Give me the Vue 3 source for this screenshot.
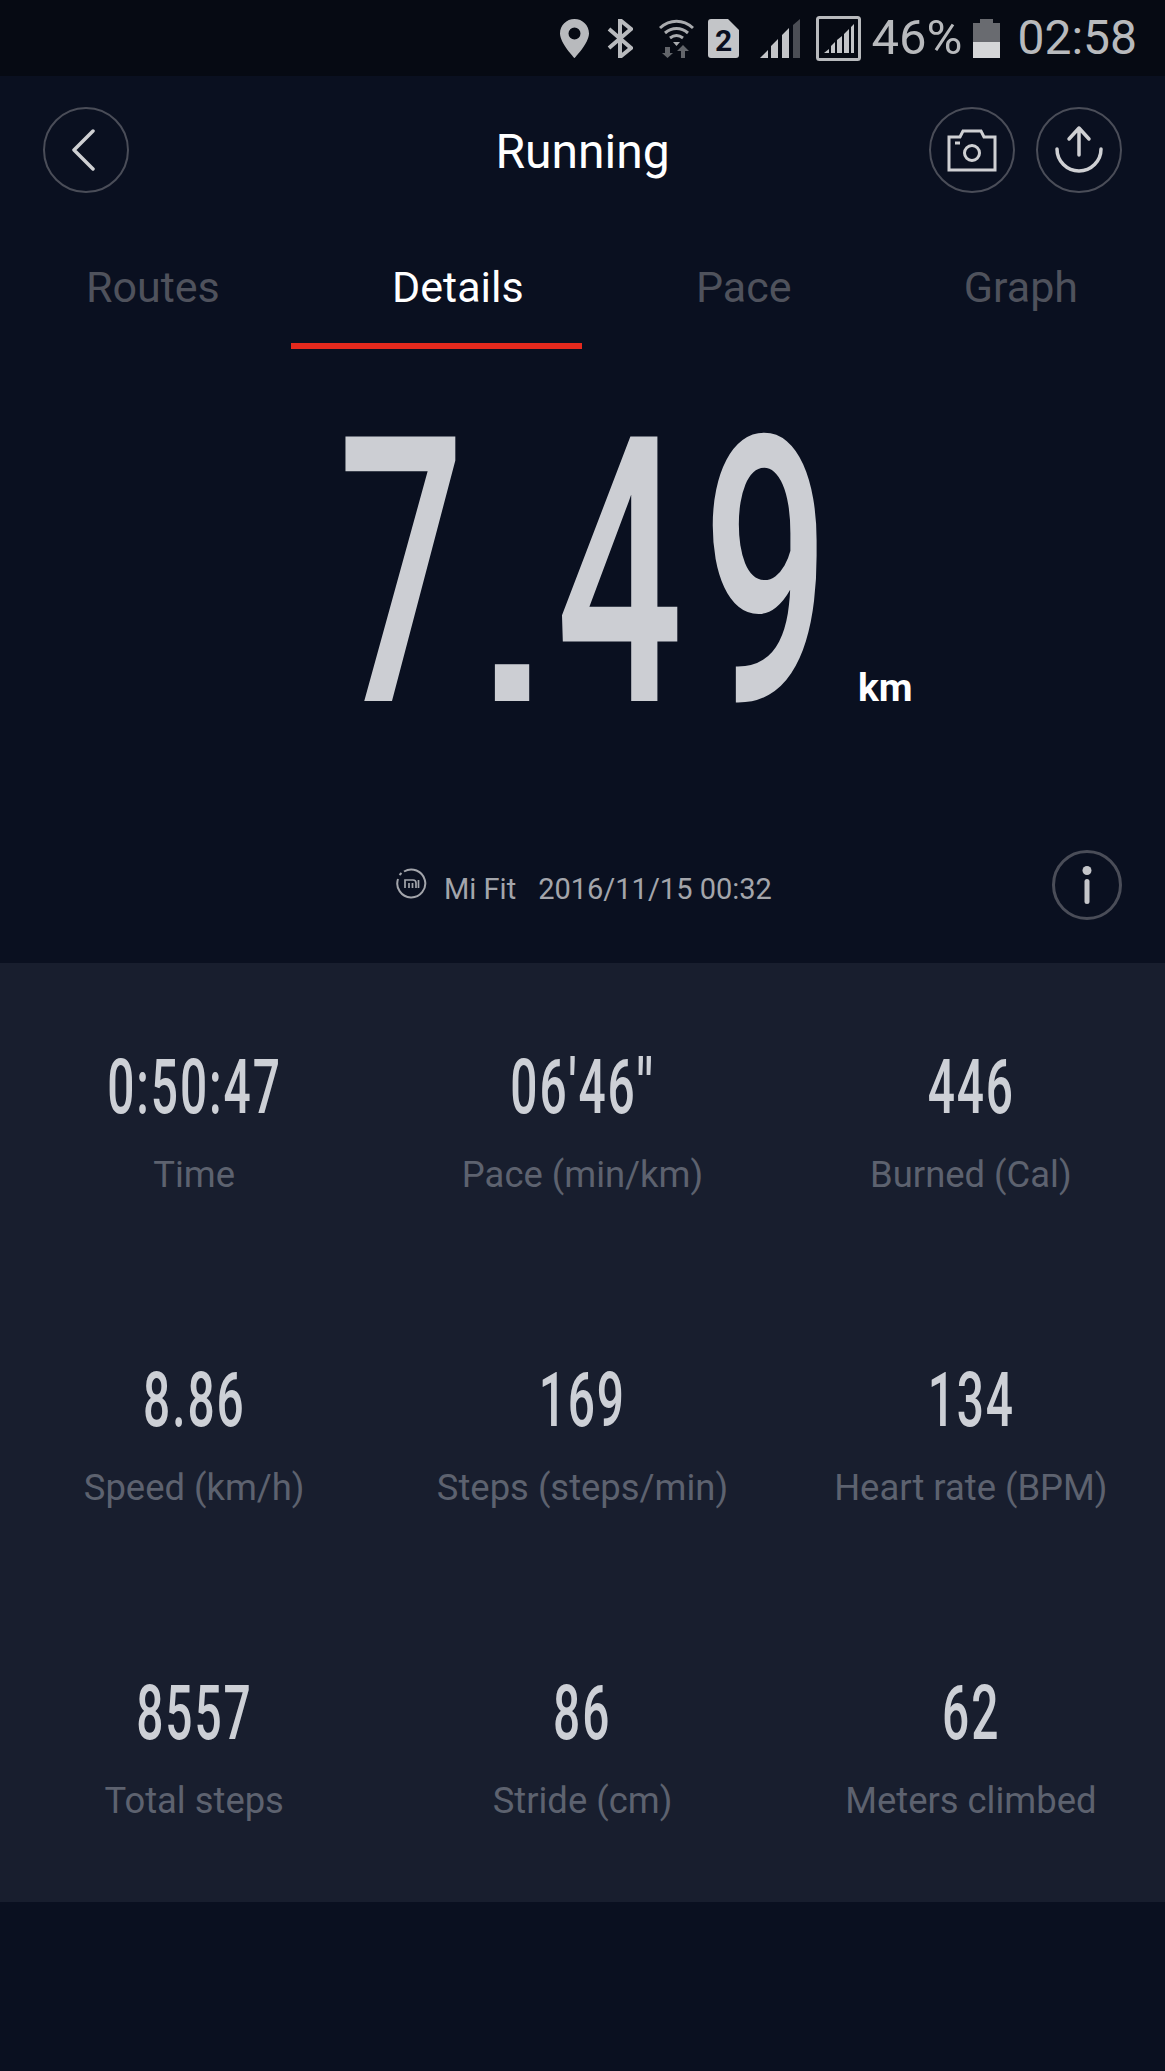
<template>
  <div class="page">
    <div class="status">
      <svg class="ic" width="29" height="39" viewBox="0 0 29 39"><path fill-rule="evenodd" d="M14.500 0C6.500 0 0 6.400 0 14.400 0 24 14.500 39 14.500 39S29 24 29 14.400C29 6.400 22.500 0 14.500 0zm0 8.500a6 6 0 1 1 0 12 6 6 0 0 1 0-12z" fill="#b8babd"/></svg>
      <svg class="ic bt" width="26" height="39" viewBox="0 0 26 39"><path d="M2 10l22 19-11 9V1l11 9L2 29" fill="none" stroke="#b8babd" stroke-width="4"/></svg>
      <svg class="ic wifi" width="35" height="39" viewBox="0 0 35 39">
        <path d="M1 9c10-9 23-9 33 0M6 14c7-6 16-6 23 0M11 19c4-3 9-3 13 0" fill="none" stroke="#a9abae" stroke-width="3"/>
        <path d="M14 23h7l-3.500 4z" fill="#a9abae"/>
        <path d="M6 28h5v6h3l-5.500 5-5.500-5h3zM22 39v-7h-4l6-6 6 6h-4v7z" fill="#62656a"/>
      </svg>
      <svg class="ic sim" width="31" height="39" viewBox="0 0 31 39"><path d="M3 0h17l11 11v25a3 3 0 0 1-3 3H3a3 3 0 0 1-3-3V3a3 3 0 0 1 3-3z" fill="#c3c5c8"/><text x="15.500" y="32" text-anchor="middle" class="simtxt">2</text></svg>
      <svg class="ic sig" width="41" height="39" viewBox="0 0 41 39"><path d="M0 39l8-8v8zM11 39V27l7-7v19zM22 39V16l7-7v30z" fill="#c3c5c8"/><path d="M33 39V6l7-6v39z" fill="#4b4e55"/></svg>
      <svg class="ic box" width="45" height="45" viewBox="0 0 45 45"><rect x="1.500" y="1.500" width="42" height="42" rx="2" fill="none" stroke="#b8babd" stroke-width="3"/><path d="M8 37l5-4v4zM15 37v-7l4-4v11zM21 37V24l5-4v17zM28 37V18l5-5v24zM35 37V11l3-3v29z" fill="#c3c5c8"/></svg>
      <span class="pct">46%</span>
      <svg class="ic bat" width="27" height="39" viewBox="0 0 27 39"><path d="M0 4h7V0h13v4h7v19H0z" fill="#696b70"/><rect y="23" width="27" height="16" fill="#d5d6d8"/></svg>
      <span class="clock">02:58</span>
    </div>

    <header class="head">
      <div class="left">
        <button class="round back">
          <svg width="26" height="42" viewBox="0 0 26 42"><path d="M23 2L4 21l19 19" fill="none" stroke="#cfd0d3" stroke-width="3.500" stroke-linecap="round" stroke-linejoin="round"/></svg>
        </button>
      </div>
      <div class="title">Running</div>
      <div class="right">
        <button class="round">
          <svg width="50" height="43" viewBox="0 0 50 43" fill="none" stroke="#cfd0d3" stroke-width="3">
            <path d="M2 41V8h11l3-6h18l3 6h11v33z"/><circle cx="25" cy="24" r="7.500"/><path d="M8 14h5"/>
          </svg>
        </button>
        <button class="round">
          <svg width="50" height="50" viewBox="0 0 50 50" fill="none" stroke="#cfd0d3" stroke-width="3.500" stroke-linecap="round" stroke-linejoin="round">
            <path d="M25 30V3M15 14L25 3l10 11"/><path d="M3 24a22 22 0 1 0 44 0"/>
          </svg>
        </button>
      </div>
    </header>

    <nav class="tabs">
      <span v-for="t in tabs" :key="t" class="tab" :class="{ on: t === 'Details' }">{{ t }}</span>
    </nav>
    <div class="line"></div>

    <section class="hero">
      <div class="big-row">
        <span class="big seven">7</span><span class="dot">.</span><span class="big rest">49</span>
        <span class="km">km</span>
      </div>
      <div class="meta">
        <svg class="mi" width="32" height="32" viewBox="0 0 32 32" fill="none" stroke="#a3a5ab" stroke-width="2">
          <path d="M9 3.500A14 14 0 1 1 3 11"/><path d="M4.500 7l2-2"/>
          <path d="M10 20v-8h8a3 3 0 0 1 3 3v5M14 20v-5M17.500 20v-5M23.500 12v8" stroke-width="1.700"/>
        </svg>
        <span class="app">Mi Fit</span>
        <span class="date">2016/11/15 00:32</span>
        <button class="round info">
          <svg width="10" height="38" viewBox="0 0 10 38"><circle cx="5" cy="4.500" r="4.500" fill="#c5c6ca"/><rect x="2.500" y="13" width="5" height="25" rx="2.500" fill="#c5c6ca"/></svg>
        </button>
      </div>
    </section>

    <section class="panel">
      <div v-for="s in stats" :key="s.label" class="cell">
        <span class="val">{{ s.value }}</span>
        <span class="lab">{{ s.label }}</span>
      </div>
    </section>
  </div>
</template>

<script setup>
const tabs = ['Routes', 'Details', 'Pace', 'Graph']

const stats = [
  { value: '0:50:47', label: 'Time' },
  { value: "06'46''", label: 'Pace (min/km)' },
  { value: '446', label: 'Burned (Cal)' },
  { value: '8.86', label: 'Speed (km/h)' },
  { value: '169', label: 'Steps (steps/min)' },
  { value: '134', label: 'Heart rate (BPM)' },
  { value: '8557', label: 'Total steps' },
  { value: '86', label: 'Stride (cm)' },
  { value: '62', label: 'Meters climbed' }
]
</script>

<style>
html, body {
  background: #0a1020;
}
</style>

<style scoped>
.page {
  width: 1165px;
  height: 2071px;
  background: #0a1020;
  font-family: Roboto, "Liberation Sans", sans-serif;
  overflow: hidden;
}

.status {
  height: 76px;
  background: #060a13;
  display: flex;
  align-items: center;
  justify-content: flex-end;
  padding: 0 28px 0 0;
  box-sizing: border-box;
  color: #b8babd;
}
.ic {
  display: block;
  flex: none;
}
.bt { margin-left: 18px; }
.wifi { margin-left: 26px; }
.sim { margin-left: 14px; }
.sig { margin-left: 21px; }
.box { margin-left: 15px; }
.pct {
  margin-left: 11px;
  font-size: 49px;
  line-height: 80px;
}
.bat { margin-left: 11px; }
.clock {
  margin-left: 17px;
  font-size: 48px;
  line-height: 80px;
}
.simtxt {
  font-family: Roboto, sans-serif;
  font-size: 30px;
  font-weight: 700;
  fill: #090e1e;
}

.head {
  display: grid;
  grid-template-columns: 1fr auto 1fr;
  align-items: center;
  padding: 31px 43px 0;
}
.right {
  display: flex;
  justify-content: flex-end;
  gap: 21px;
}
.round {
  width: 86px;
  height: 86px;
  border: 2px solid #4a4d58;
  border-radius: 50%;
  background: none;
  padding: 0;
  display: flex;
  align-items: center;
  justify-content: center;
  box-sizing: border-box;
}
.back {
  padding-right: 7px;
}
.title {
  color: #fff;
  font-size: 48px;
  line-height: 86px;
  padding-top: 2px;
  height: 86px;
  box-sizing: border-box;
}

.tabs {
  display: flex;
  justify-content: space-between;
  padding: 64px 87px 0 86px;
}
.tab {
  color: #4f525c;
  font-size: 43px;
  line-height: 60px;
}
.tab.on {
  color: #fff;
}
.line {
  width: 291px;
  height: 6px;
  margin: 26px 0 0 291px;
  background: #e5291d;
}

.hero {
  height: 614px;
  box-sizing: border-box;
  padding-top: 93px;
}
.big-row {
  display: flex;
  align-items: baseline;
  height: 265px;
  padding-left: 338px;
  line-height: 265px;
}
.big {
  display: inline-block;
  flex: none;
  font-size: 372px;
  font-weight: 500;
  color: #ccced3;
  transform: scaleX(0.6);
  transform-origin: left center;
  white-space: nowrap;
}
.seven {
  width: 137px;
}
.rest {
  width: 302px;
  letter-spacing: 33px;
}
/* square full stop, Roboto's is round */
.dot {
  flex: none;
  width: 81px;
  font-family: "DejaVu Sans", sans-serif;
  font-size: 195px;
  font-weight: 700;
  color: #ccced3;
}
.km {
  font-size: 39px;
  font-weight: 700;
  color: #fff;
}
.meta {
  display: flex;
  align-items: center;
  margin-top: 143px;
  padding: 0 43px 0 395px;
  color: #a3a5ab;
  font-size: 29px;
}
.mi {
  margin-bottom: 3px;
}
.app {
  margin-left: 17px;
  padding-top: 7px;
}
.date {
  margin-left: 22px;
  padding-top: 7px;
}
.info {
  width: 70px;
  height: 70px;
  margin-left: auto;
  border-width: 3px;
}

.panel {
  height: 939px;
  background: #181e2e;
  display: grid;
  grid-template-columns: repeat(3, 1fr);
  grid-auto-rows: 313px;
}
.cell {
  display: flex;
  flex-direction: column;
  align-items: center;
  padding-top: 88px;
}
.val {
  font-size: 76px;
  line-height: 72px;
  font-weight: 500;
  letter-spacing: 3px;
  color: #cdd0d6;
  transform: scaleX(0.63);
  white-space: nowrap;
}
.lab {
  margin-top: 30px;
  font-size: 36.4px;
  line-height: 44px;
  color: #5d626f;
  white-space: nowrap;
}
</style>
